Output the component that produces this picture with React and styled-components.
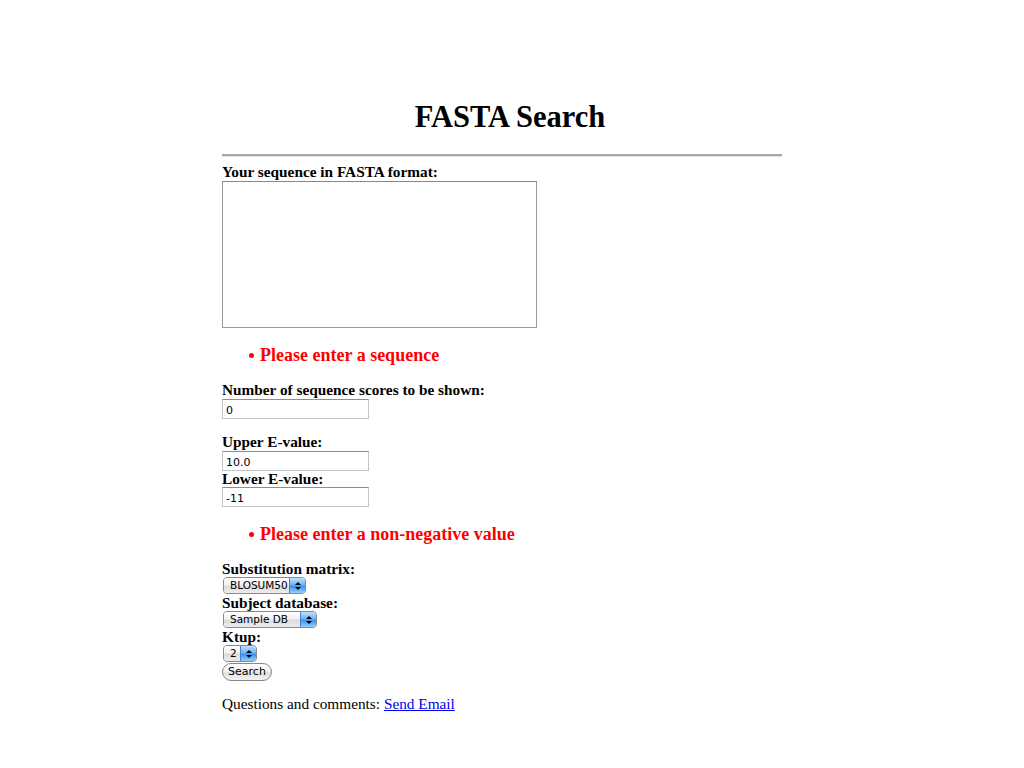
import React from 'react';
import styled, { createGlobalStyle } from 'styled-components';

const GlobalStyle = createGlobalStyle`
  html, body {
    margin: 0;
    padding: 0;
    background: #fff;
    color: #000;
    font-family: "Liberation Serif", "Times New Roman", serif;
    font-size: 15.3px;
  }
`;

// ========== Basic Components =============
const Page = styled.div`
  padding-top: 98px;
  padding-bottom: 40px;
`;

const Title = styled.h1`
  margin: 0 0 18px 0;
  padding-right: 4px;
  font-size: 30.5px;
  line-height: 38px;
  font-weight: bold;
  text-align: center;
`;

const Content = styled.div`
  margin-left: 222px;
  width: 560px;
`;

const Rule = styled.hr`
  margin: 0 0 6px 0;
  height: 0;
  border: none;
  border-top: 2px solid #a8a8a8;
  border-bottom: 1px solid #e2e2e2;
`;

const Label = styled.div`
  font-weight: bold;
  line-height: ${(p) => p.lh || 18}px;
  margin-top: ${(p) => p.top || 0}px;
`;

const SequenceBox = styled.textarea`
  display: block;
  box-sizing: border-box;
  width: 315px;
  height: 147px;
  margin: 0;
  border: 1px solid #9a9a9a;
  border-top-color: #888;
  resize: none;
  outline: none;
`;

const Errors = styled.ul`
  margin: 16px 0 15px 0;
  padding-left: 38px;
  list-style: none;
  color: #ff0000;
  font-weight: bold;
  font-size: 18px;
  line-height: 22px;

  & > li::before {
    content: '';
    display: inline-block;
    width: 5px;
    height: 5px;
    border-radius: 50%;
    background: #ff0000;
    vertical-align: middle;
    margin: -2px 6px 0 -11px;
  }
`;

const TextInput = styled.input`
  display: block;
  box-sizing: border-box;
  width: 147px;
  height: 20px;
  margin: 0;
  padding: 2px 3px 0;
  border: 1px solid #c4c4c4;
  border-top: 1px solid #8e8e8e;
  font-family: "DejaVu Sans", "Verdana", sans-serif;
  font-size: 11px;
  outline: none;
`;

const SelectBox = styled.div`
  display: flex;
  box-sizing: border-box;
  width: ${(p) => p.w}px;
  height: 17px;
  margin-left: 1px;
  border: 1px solid #8a8a8a;
  border-radius: 4px;
  overflow: hidden;
  font-family: "DejaVu Sans", "Verdana", sans-serif;
  font-size: 10.5px;
`;

const SelectText = styled.span`
  flex: 1;
  padding-left: 6px;
  line-height: 15px;
  background: linear-gradient(#ffffff 0%, #f2f2f2 45%, #dcdcdc 55%, #ececec 100%);
`;

const SelectArrow = styled.span`
  width: 15px;
  display: flex;
  align-items: center;
  justify-content: center;
  border-left: 1px solid #4f7fc6;
  background: linear-gradient(#bfe0ff 0%, #6fb4f6 45%, #3f90ec 55%, #8fd0ff 100%);
`;

const SearchButton = styled.button`
  display: block;
  box-sizing: border-box;
  width: 50px;
  height: 18px;
  margin: 1px 0 0 0;
  padding: 0;
  border: 1px solid #888;
  border-radius: 9px;
  background: linear-gradient(#ffffff 0%, #f3f3f3 45%, #e0e0e0 55%, #f2f2f2 100%);
  font-family: "DejaVu Sans", "Verdana", sans-serif;
  font-size: 11px;
  line-height: 16px;
  color: #000;
`;

const Footer = styled.p`
  margin: 14px 0 0 0;
  line-height: 18px;
`;

const MailLink = styled.a`
  color: #0000ee;
  text-decoration: underline;
`;

// ========== Compound Components ==========
function Select(props) {
  return (
    <SelectBox w={props.width}>
      <SelectText>{props.value}</SelectText>
      <SelectArrow>
        <svg width="6" height="10" viewBox="0 0 6 10">
          <path d="M0 4 L3 1 L6 4 Z" fill="#000" />
          <path d="M0 6 L3 9 L6 6 Z" fill="#000" />
        </svg>
      </SelectArrow>
    </SelectBox>
  );
}

export default function App() {
  return (
    <Page>
      <GlobalStyle />
      <Title>FASTA Search</Title>
      <Content>
        <Rule />
        <Label>Your sequence in FASTA format:</Label>
        <SequenceBox />
        <Errors>
          <li>Please enter a sequence</li>
        </Errors>
        <Label>Number of sequence scores to be shown:</Label>
        <TextInput defaultValue="0" />
        <Label top={14}>Upper E-value:</Label>
        <TextInput defaultValue="10.0" />
        <Label lh={16}>Lower E-value:</Label>
        <TextInput defaultValue="-11" />
        <Errors>
          <li>Please enter a non-negative value</li>
        </Errors>
        <Label lh={17}>Substitution matrix:</Label>
        <Select width={83} value="BLOSUM50" />
        <Label lh={17}>Subject database:</Label>
        <Select width={94} value="Sample DB" />
        <Label lh={17}>Ktup:</Label>
        <Select width={34} value="2" />
        <SearchButton>Search</SearchButton>
        <Footer>
          Questions and comments: <MailLink href="#">Send Email</MailLink>
        </Footer>
      </Content>
    </Page>
  );
}
